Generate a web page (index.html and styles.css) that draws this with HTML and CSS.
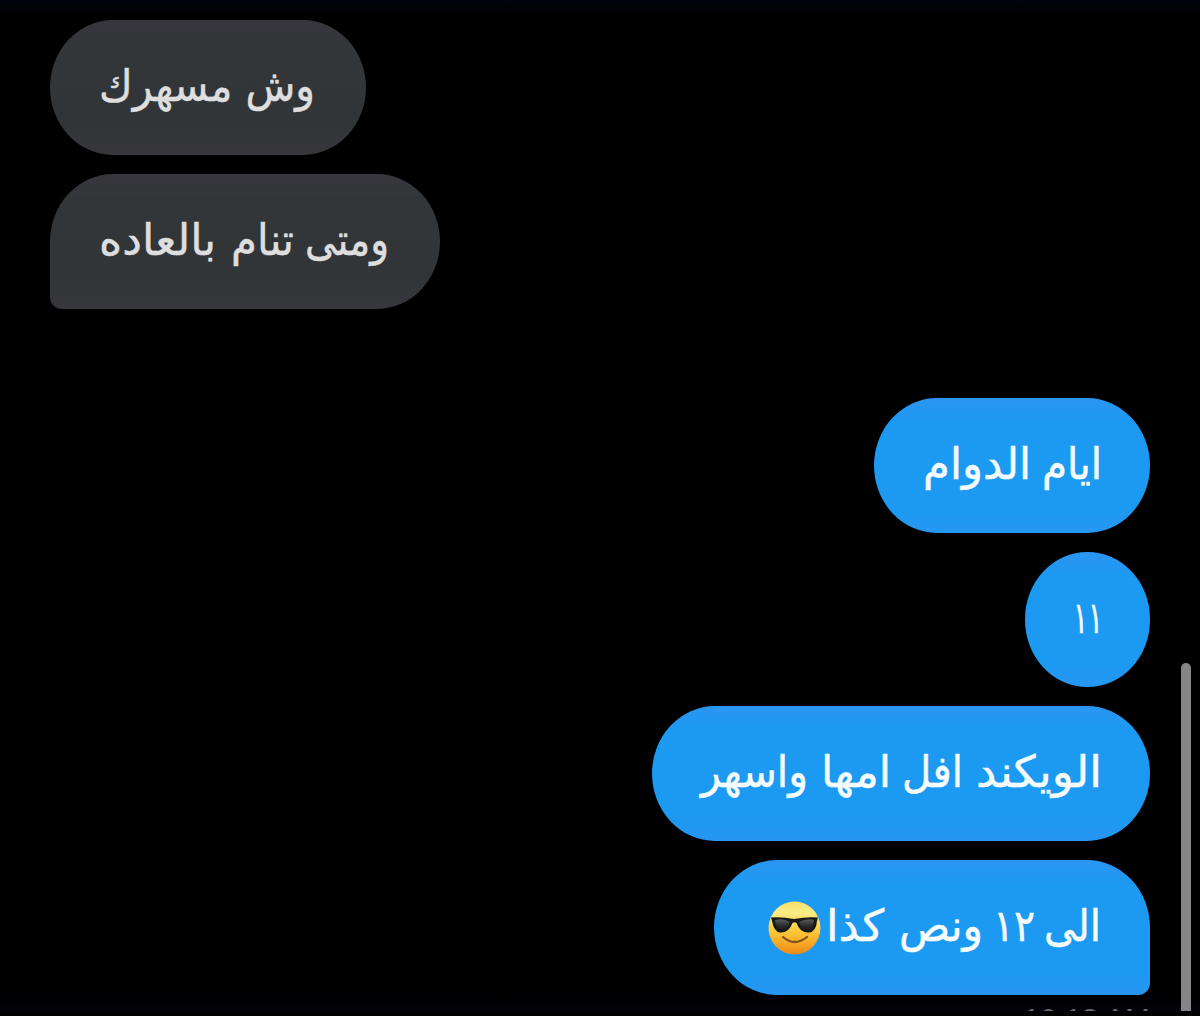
FILE: index.html
```html
<!DOCTYPE html>
<html lang="ar">
<head>
<meta charset="utf-8">
<title>Messages</title>
<link rel="stylesheet" href="styles.css">
</head>
<body>
<main class="chat">
  <section class="thread">
    <div class="group received">
      <div class="bubble b-awake"><svg class="line" viewBox="0 0 216 135"><text x="216" y="81" textLength="216" lengthAdjust="spacingAndGlyphs">وش مسهرك</text></svg></div>
      <div class="bubble b-when tail"><svg class="line" viewBox="0 0 288 135"><text y="81"><tspan x="288" textLength="84" lengthAdjust="spacingAndGlyphs">ومتى</tspan> <tspan x="193" textLength="63" lengthAdjust="spacingAndGlyphs">تنام</tspan> <tspan x="115" textLength="117" lengthAdjust="spacingAndGlyphs">بالعاده</tspan></text></svg></div>
    </div>
    <div class="group sent">
      <div class="bubble b-days"><svg class="line" viewBox="0 0 174 135"><text y="81"><tspan x="177" textLength="60" lengthAdjust="spacingAndGlyphs">ايام</tspan> <tspan x="106" textLength="108" lengthAdjust="spacingAndGlyphs">الدوام</tspan></text></svg></div>
      <div class="bubble b-eleven"><svg class="line" viewBox="0 0 23 135"><text x="27" y="81" textLength="30" lengthAdjust="spacingAndGlyphs">١١</text></svg></div>
      <div class="bubble b-weekend"><svg class="line" viewBox="0 0 396 135"><text y="81"><tspan x="399" textLength="126" lengthAdjust="spacingAndGlyphs">الويكند</tspan> <tspan x="260" textLength="61" lengthAdjust="spacingAndGlyphs">افل</tspan> <tspan x="188" textLength="70" lengthAdjust="spacingAndGlyphs">امها</tspan> <tspan x="105" textLength="107" lengthAdjust="spacingAndGlyphs">واسهر</tspan></text></svg></div>
      <div class="bubble b-twelve tail">
        <svg class="line" viewBox="0 0 271 135"><text y="81"><tspan x="273" textLength="57" lengthAdjust="spacingAndGlyphs">الى</tspan> <tspan x="207" textLength="42" lengthAdjust="spacingAndGlyphs">١٢</tspan> <tspan x="155" textLength="84" lengthAdjust="spacingAndGlyphs">ونص</tspan> <tspan x="56" textLength="58" lengthAdjust="spacingAndGlyphs">كذا</tspan></text></svg>
        <svg class="emoji" viewBox="0 0 53 54">
          <defs>
            <linearGradient id="face" x1="0" y1="0" x2="0" y2="1"><stop offset="0" stop-color="#f6df68"/><stop offset=".2" stop-color="#fbed86"/><stop offset=".55" stop-color="#fbca3b"/><stop offset="1" stop-color="#ee8a16"/></linearGradient>
            <linearGradient id="lens" x1="0" y1="0" x2="0" y2="1"><stop offset="0" stop-color="#5b5c60"/><stop offset=".6" stop-color="#28292c"/><stop offset="1" stop-color="#191716"/></linearGradient>
          </defs>
          <ellipse cx="26.5" cy="27" rx="26" ry="26.4" fill="url(#face)"/>
          <path d="M15 36Q26.500 46 39 36" fill="none" stroke="#85501a" stroke-width="2.200" stroke-linecap="round"/>
          <path d="M3 16.500Q13 15.500 26 18Q39 15.500 50 16.500L49 20Q48 31 41 31.500Q32 32 28.500 22Q26.500 20.500 24.500 22Q21 32 12 31.500Q6 31 4 20Z" fill="#191919"/>
          <path d="M7 19Q15 17 22 21Q19 29.500 13 29.500Q8 29 7 19ZM31 21Q39 17 46 19Q45 29 40 29.500Q34 29.500 31 21Z" fill="url(#lens)"/>
        </svg>
      </div>
    </div>
    <div class="stamp" dir="ltr">10:13 AM</div>
  </section>
  <aside class="rail"><div class="thumb"></div></aside>
</main>
</body>
</html>
```
FILE: styles.css
```css
body { margin: 0; background: #000; }
.chat { display: flex; box-sizing: border-box; width: 1200px; height: 1011px; overflow: hidden; background: linear-gradient(#03030c 0, #000 17px, #000 992px, #02020a 100%); }
.thread { display: flex; flex-direction: column; box-sizing: border-box; width: 1181px; padding: 20px 31px 0 50px; }
.group { display: flex; flex-direction: column; gap: 19px; }
.received { align-items: flex-start; color: #dededf; margin-bottom: 89px; }
.sent { align-items: flex-end; color: #f5fcff; }
.bubble { display: flex; flex-direction: row-reverse; align-items: center; box-sizing: border-box; flex-shrink: 0; height: 135px; padding: 0 51px; border-radius: 63px / 67.5px; }
.received .bubble { background: linear-gradient(#38363d 0, #323639 25px, #313538 105px, #38373c 100%); }
.sent .bubble { background: linear-gradient(#2b96f2 0, #1c99f1 25px, #1c99f1 110px, #2697f3 100%); }
.received .tail { border-bottom-left-radius: 12px; }
.sent .tail { border-bottom-right-radius: 12px; }
.b-awake { width: 316px; }
.b-when { width: 390px; }
.b-days { width: 276px; }
.b-eleven { width: 125px; }
.b-weekend { width: 498px; }
.b-twelve { width: 436px; gap: 7px; }
.line { display: block; flex: 1; height: 135px; overflow: visible; }
.line text { font: 44px "DejaVu Sans", sans-serif; fill: currentColor; stroke: currentColor; stroke-width: 0.5px; direction: rtl; }
.emoji { display: block; flex: none; width: 53px; height: 54px; margin-left: 4px; }
.stamp { align-self: flex-end; flex: none; height: 24px; margin-top: 6px; font: 30px/36px "Liberation Sans", sans-serif; color: #66666c; }
.rail { display: flex; flex-direction: column; justify-content: flex-end; width: 10px; }
.thumb { height: 348px; border-radius: 5px 5px 0 0; background: #858585; }
```
